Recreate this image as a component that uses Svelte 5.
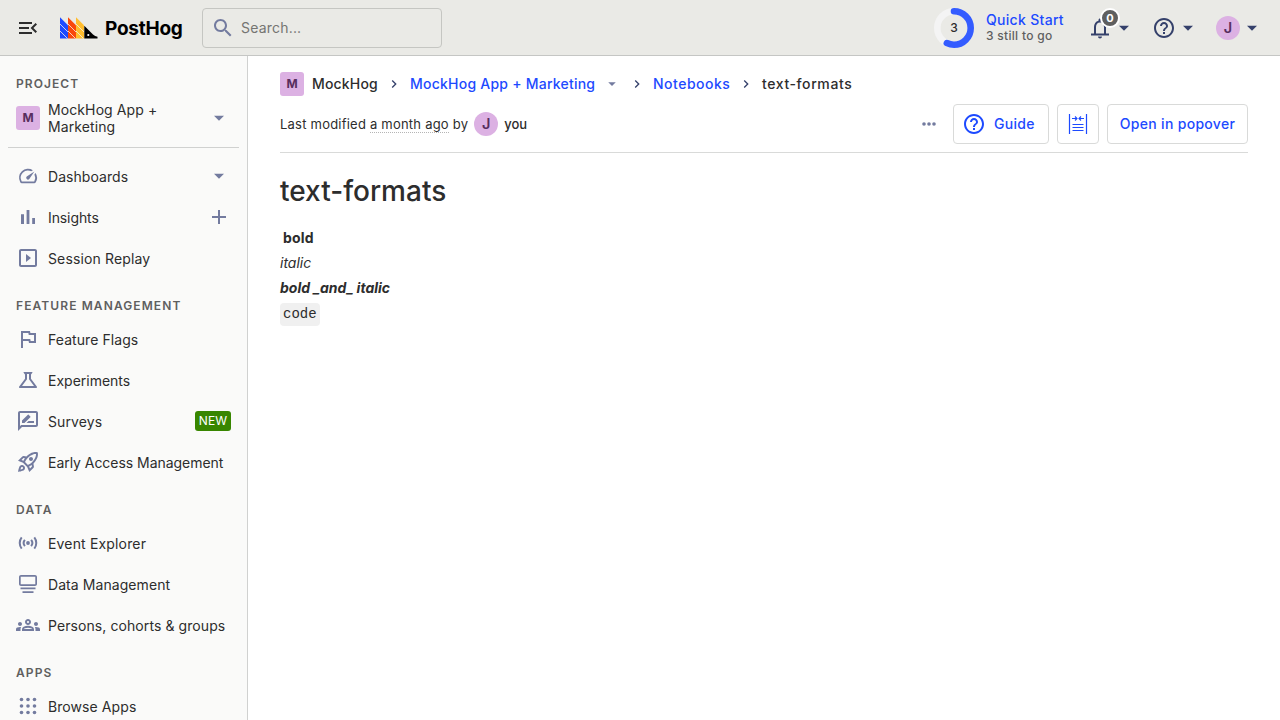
<script>
  const icons = {
    menu: 'M3 18h13v-2H3v2zm0-5h10v-2H3v2zm0-7v2h13V6H3zm18 9.59L17.42 12 21 8.41 19.59 7l-5 5 5 5L21 15.59z',
    search: 'M15.5 14h-.79l-.28-.27C15.41 12.59 16 11.11 16 9.5 16 5.91 13.09 3 9.5 3S3 5.91 3 9.5 5.91 16 9.5 16c1.61 0 3.09-.59 4.23-1.57l.27.28v.79l5 4.99L20.49 19l-4.99-5zm-6 0C7.01 14 5 11.99 5 9.5S7.01 5 9.5 5 14 7.01 14 9.5 11.99 14 9.5 14z',
    bell: 'M12 22.6c1.1 0 2-.9 2-2h-4c0 1.1.9 2 2 2zm6-6v-5.6c0-3.07-1.63-5.64-4.5-6.32V4c0-.83-.67-1.5-1.5-1.5s-1.5.67-1.5 1.5v.68C7.64 5.36 6 7.92 6 11v6.5H3v2h18v-2h-3v-1zm-2 .9H8v-6.5c0-2.48 1.51-4.5 4-4.5s4 2.02 4 4.5v6.5z',
    help: 'M11 18h2v-2h-2v2zm1-16C6.48 2 2 6.48 2 12s4.48 10 10 10 10-4.48 10-10S17.52 2 12 2zm0 18c-4.41 0-8-3.59-8-8s3.59-8 8-8 8 3.59 8 8-3.59 8-8 8zm0-14c-2.21 0-4 1.79-4 4h2c0-1.1.9-2 2-2s2 .9 2 2c0 2-3 1.75-3 5h2c0-2.25 3-2.5 3-5 0-2.21-1.79-4-4-4z',
    drop: 'M7 9.7l5 5 5-5z',
    plus: 'M19 13h-6v6h-2v-6H5v-2h6V5h2v6h6v2z',
    chart: 'M5 9.2h3V19H5V9.2zM10.6 5h2.8v14h-2.8V5zm5.6 8H19v6h-2.8v-6z',
    play: 'M10 8v8l5-4-5-4zm9-5H5c-1.1 0-2 .9-2 2v14c0 1.1.9 2 2 2h14c1.1 0 2-.9 2-2V5c0-1.1-.9-2-2-2zm0 16H5V5h14v14z',
    flag: 'M12.36 6l.4 2H18v6h-3.36l-.4-2H7V6h5.36M14 4H5v17h2v-7h5.6l.4 2h7V6h-5.6L14 4z',
    flask: 'M13 11.33L18 18H6l5-6.67V6h2m2.96-2H8.04c-.42 0-.65.48-.39.81L9 6.5v4.17L3.2 18.4c-.49.66-.02 1.6.8 1.6h16c.82 0 1.29-.94.8-1.6L15 10.67V6.5l1.35-1.69c.26-.33.03-.81-.39-.81z',
    survey: 'M20 2H4c-1.1 0-1.99.9-1.99 2L2 22l4-4h14c1.1 0 2-.9 2-2V4c0-1.1-.9-2-2-2zm0 14H5.17l-.59.59-.58.58V4h16v12zm-9.5-2H18v-2h-5.5zm3.86-5.87c.2-.2.2-.51 0-.71l-1.77-1.77c-.2-.2-.51-.2-.71 0L6 11.53V14h2.47l5.89-5.87z',
    rocket: 'M6 15c-.83 0-1.58.34-2.12.88C2.7 17.06 2 22 2 22s4.94-.7 6.12-1.88C8.66 19.58 9 18.83 9 18c0-1.66-1.34-3-3-3zm.71 3.71c-.28.28-2.17.76-2.17.76s.47-1.88.76-2.17c.17-.19.42-.3.7-.3.55 0 1 .45 1 1 0 .28-.11.53-.29.71zM17.42 13.65c6.36-6.36 4.24-11.31 4.24-11.31s-4.95-2.12-11.31 4.24l-2.49-.5c-.65-.13-1.33.08-1.81.55L2 10.69l5 2.14L11.17 17l2.14 5 4.05-4.05c.47-.47.68-1.15.55-1.81l-.49-2.49zM7.41 10.83l-1.91-.82 1.97-1.97 1.44.29c-.57.83-1.08 1.7-1.5 2.5zm6.58 7.67l-.82-1.91c.8-.42 1.67-.93 2.49-1.5l.29 1.44-1.96 1.97zM16 12.24c-1.32 1.32-3.38 2.4-4.04 2.73l-2.93-2.93c.32-.65 1.4-2.71 2.73-4.04 4.68-4.68 8.23-3.99 8.23-3.99s.69 3.55-3.99 8.23zM15 11c1.1 0 2-.9 2-2s-.9-2-2-2-2 .9-2 2 .9 2 2 2z',
    data: 'M5 3h14c1.1 0 2 .9 2 2v7c0 1.1-.9 2-2 2H5c-1.1 0-2-.9-2-2V5c0-1.1.9-2 2-2zm-.3 1.7v7.6h14.6V4.7H4.7zM4.5 15.5h15v1.8h-15zM6.5 19.2h11v1.8h-11z',
    groups: 'M4 13c1.1 0 2-.9 2-2s-.9-2-2-2-2 .9-2 2 .9 2 2 2zm1.13 1.1c-.37-.06-.74-.1-1.13-.1-.99 0-1.93.21-2.78.58C.48 14.9 0 15.62 0 16.43V18h4.5v-1.61c0-.83.23-1.61.63-2.29zM20 13c1.1 0 2-.9 2-2s-.9-2-2-2-2 .9-2 2 .9 2 2 2zm4 3.43c0-.81-.48-1.53-1.22-1.85-.85-.37-1.79-.58-2.78-.58-.39 0-.76.04-1.13.1.4.68.63 1.46.63 2.29V18H24v-1.57zm-7.76-2.78c-1.17-.52-2.61-.9-4.24-.9s-3.07.39-4.24.9C6.68 14.13 6 15.21 6 16.39V18h12v-1.61c0-1.18-.68-2.26-1.76-2.74zM8.07 16c.09-.23.13-.39.91-.69.97-.38 1.99-.56 3.02-.56s2.05.18 3.02.56c.77.3.81.46.91.69H8.07zM12 8c.55 0 1 .45 1 1s-.45 1-1 1-1-.45-1-1 .45-1 1-1m0-2c-1.66 0-3 1.34-3 3s1.34 3 3 3 3-1.34 3-3-1.34-3-3-3z',
    chevron: 'M8.6 16.6L13.2 12 8.6 7.4 10 6l6 6-6 6z'
  };

  const sections = [
    { items: [
      { label: 'Dashboards', icon: 'gauge', side: 'drop', track: 0.05 },
      { label: 'Insights', icon: 'chart', side: 'plus', track: -0.1 },
      { label: 'Session Replay', icon: 'play', track: 0.13 }
    ] },
    { title: 'Feature management', track: 1.1, items: [
      { label: 'Feature Flags', icon: 'flag', track: 0.07 },
      { label: 'Experiments', icon: 'flask', track: 0 },
      { label: 'Surveys', icon: 'survey', tag: 'NEW', track: 0.1 },
      { label: 'Early Access Management', icon: 'rocket', track: -0.04 }
    ] },
    { title: 'Data', track: 1.3, items: [
      { label: 'Event Explorer', icon: 'live', track: 0.16 },
      { label: 'Data Management', icon: 'data', track: 0.07 },
      { label: 'Persons, cohorts & groups', icon: 'groups', track: 0.08 }
    ] },
    { title: 'Apps', track: 1.1, items: [{ label: 'Browse Apps', icon: 'apps', track: 0.08 }] }
  ];
</script>

{#snippet icon(name, size = 24)}
  <svg width={size} height={size} viewBox="0 0 24 24" fill="currentColor" aria-hidden="true">
    {#if name === 'gauge'}
      <g transform="translate(1.2 1.2) scale(.9)">
        <path d="M20.38 8.57l-1.23 1.85a8 8 0 0 1-.22 7.58H5.07A8 8 0 0 1 15.58 6.85l1.85-1.23A10 10 0 0 0 3.35 19a2 2 0 0 0 1.72 1h13.85a2 2 0 0 0 1.74-1 10 10 0 0 0-.27-10.44zM10.59 15.41a2 2 0 0 0 2.83 0l5.66-8.49-8.49 5.66a2 2 0 0 0 0 2.83z" />
      </g>
    {:else if name === 'live'}
      <circle cx="12" cy="12" r="1.9" />
      <path d="M8.9 8.9a4.8 4.8 0 0 0 0 6.2M15.1 8.9a4.8 4.8 0 0 1 0 6.2M5.7 6.4a8.9 8.9 0 0 0 0 11.2M18.3 6.4a8.9 8.9 0 0 1 0 11.2" fill="none" stroke="currentColor" stroke-width="2" />
    {:else if name === 'apps'}
      {#each [5.5, 12, 18.5] as y}
        {#each [5.5, 12, 18.5] as x}
          <circle cx={x} cy={y} r="1.8" />
        {/each}
      {/each}
    {:else}
      <path d={icons[name]} />
    {/if}
  </svg>
{/snippet}

<div class="app">
  <header>
    <div class="menu">{@render icon('menu')}</div>
    <div class="logo">
      <svg width="38" height="22" viewBox="0 0 38 22" aria-hidden="true">
        <path fill="#1d4aff" d="M0 .3L8 8.3V21.5H0z" />
        <path fill="#f9480b" d="M8 .3L16 8.3V21.5H8z" />
        <path fill="#ffbd2e" d="M16 .3L24 8.3V21.5H16z" />
        <path d="M0 7L8 15M0 14L7.5 21.5M8 7L16 15M8 14L15.5 21.5M16 7L24 15M16 14L23.5 21.5" stroke="#f4f1ea" stroke-width=".8" />
        <path fill="#000" d="M24.3 8.8L33 17.5Q35 19.4 37.5 19.8V21.5H24.3z" />
        <circle cx="28.3" cy="18" r="1.1" fill="#fff" />
      </svg>
      <span>PostHog</span>
    </div>
    <div class="search">{@render icon('search')}<span>Search...</span></div>
    <div class="quick">
      <svg width="40" height="40" viewBox="0 0 40 40" aria-hidden="true">
        <circle cx="20" cy="20" r="16.7" fill="none" stroke="#f4f4f4" stroke-width="6.6" />
        <circle cx="20" cy="20" r="16.7" fill="none" stroke="#345cff" stroke-width="6.6" stroke-linecap="round" stroke-dasharray="59.5 105" transform="rotate(-90 20 20)" />
        <text x="20" y="24.2" text-anchor="middle">3</text>
      </svg>
      <div class="quick-text"><b>Quick Start</b><span>3 still to go</span></div>
    </div>
    <div class="top-item bell">{@render icon('bell')}<i>0</i>{@render icon('drop')}</div>
    <div class="top-item">{@render icon('help')}{@render icon('drop')}</div>
    <div class="top-item"><span class="avatar round">J</span>{@render icon('drop')}</div>
  </header>

  <div class="body">
    <nav>
      <h5 class="first">Project</h5>
      <div class="row project">
        <span class="avatar">M</span>
        <span class="label">MockHog App + Marketing</span>
        {@render icon('drop')}
      </div>
      <hr />
      {#each sections as section}
        {#if section.title}<h5 style:letter-spacing="{section.track}px">{section.title}</h5>{/if}
        <div class="rows">
          {#each section.items as item}
            <div class="row">
              {@render icon(item.icon)}
              <span class="label" style:letter-spacing="{item.track}px">{item.label}</span>
              {#if item.side}{@render icon(item.side)}{/if}
              {#if item.tag}<span class="tag">{item.tag}</span>{/if}
            </div>
          {/each}
        </div>
      {/each}
    </nav>

    <main>
      <div class="crumbs">
        <span class="avatar">M</span>
        <span class="org">MockHog</span>
        <span class="sep">{@render icon('chevron', 16)}</span>
        <a class="project-link" href="#app">MockHog App + Marketing</a>
        <span class="switch">{@render icon('drop', 18)}</span>
        <span class="sep after">{@render icon('chevron', 16)}</span>
        <a class="notebooks" href="#notebooks">Notebooks</a>
        <span class="sep">{@render icon('chevron', 16)}</span>
        <span class="current">text-formats</span>
      </div>
      <div class="actions">
        <p>Last modified <u>a month ago</u> by</p>
        <span class="avatar round">J</span>
        <span class="you">you</span>
        <span class="more">
          <svg width="16" height="16" viewBox="0 0 16 16" fill="currentColor" aria-hidden="true">
            <circle cx="3" cy="8" r="1.8" /><circle cx="8" cy="8" r="1.8" /><circle cx="13" cy="8" r="1.8" />
          </svg>
        </span>
        <button class="guide">{@render icon('help')}Guide</button>
        <button class="width" aria-label="Width">
          <svg width="20" height="20" viewBox="0 0 20 20" fill="none" stroke="currentColor" aria-hidden="true">
            <path d="M1.5 0v20M18.5 0v20" stroke-width="1.2" />
            <path d="M4.5 10.5h11M4.5 13.5h11M4.5 16.5h11M4 4.5h5M16 4.5h-5M7 2.5L9 4.5 7 6.5M13 2.5L11 4.5l2 2" stroke-width="1.1" />
          </svg>
        </button>
        <button class="popover">Open in popover</button>
      </div>
      <article>
        <h1>text-formats</h1>
        <p class="lead"><strong>bold</strong></p>
        <p><em>italic</em></p>
        <p><strong><em>bold _and_ italic</em></strong></p>
        <p><code>code</code></p>
      </article>
    </main>
  </div>
</div>

<style>
  :global(body) { background: #fff; }
  .app {
    display: flex; flex-direction: column; height: 720px; overflow: hidden;
    font: 400 14px/20px Inter, sans-serif; color: #2d2d2d;
  }
  * { box-sizing: border-box; }
  svg { display: block; flex: none; }
  p, h1, h5 { margin: 0; }
  header {
    flex: none; height: 56px; display: flex; align-items: center; padding: 0 16px;
    background: #eaeae6; border-bottom: 1px solid #c5c6c4;
  }
  .logo { display: flex; align-items: center; margin-left: 20px; width: 126px; color: #000; gap: 7px; }
  .logo span { font-weight: 700; font-size: 19px; letter-spacing: -.25px; padding-top: 2px; }
  .search {
    display: flex; align-items: center; gap: 6px; width: 240px; height: 40px; margin-left: 16px;
    padding: 0 8px; border: 1px solid #c5c6c2; border-radius: 4px; color: #737b9f;
  }
  .search span { color: #757572; letter-spacing: .2px; }
  .quick { display: flex; align-items: center; gap: 12px; margin-left: auto; }
  .quick text { font-size: 12px; font-weight: 500; fill: #2d2d2d; }
  .quick-text { display: flex; flex-direction: column; width: 78px; white-space: nowrap; letter-spacing: .3px; }
  .quick-text b { color: #1d4aff; font-weight: 500; line-height: 16px; }
  .quick-text span { font-size: 12px; line-height: 16px; font-weight: 500; color: #5f5f5f; }
  .top-item { position: relative; display: flex; align-items: center; width: 48px; margin-left: 16px; color: #35416b; }
  .bell { margin-left: 24px; }
  .bell i {
    position: absolute; left: 12px; top: -8px; width: 20px; height: 20px; border-radius: 50%;
    border: 2px solid #fff; background: #5f5f5f; color: #fff;
    font: 700 11px/16px Inter, sans-serif; text-align: center;
  }
  .avatar {
    flex: none; width: 24px; height: 24px; border-radius: 3px; background: #dcb1e3; color: #572e5e;
    font-size: 12px; line-height: 24px; font-weight: 700; text-align: center;
  }
  .avatar.round { border-radius: 50%; font-size: 14.5px; font-weight: 600; }
  .body { flex: 1; display: flex; min-height: 0; }
  nav {
    flex: none; width: 248px; padding: 15px 8px 0; background: #fafaf9; overflow: hidden;
    border-right: 1px solid #d0d1d0;
  }
  h5 {
    height: 26px; margin-top: 15px; padding-left: 8px; color: #5f5f5f; text-transform: uppercase;
    font-size: 12px; line-height: 26px; font-weight: 600; letter-spacing: 1.05px;
  }
  h5.first { margin-top: 0; }
  .rows { display: flex; flex-direction: column; gap: 1px; }
  .row { display: flex; align-items: center; height: 40px; padding: 0 8px; gap: 8px; color: #737b9f; }
  .label { flex: 1; color: #2d2d2d; white-space: nowrap; padding-top: 1px; }
  .project { margin-top: 1px; }
  .project .label { white-space: normal; line-height: 17px; padding: 0 20px 0 0; letter-spacing: .1px; }
  hr { margin: 9px 0 8px; border: 0; border-top: 1px solid #d0d1d0; }
  .tag {
    width: 36px; height: 20px; border-radius: 3px; background: #388600; color: #fff; text-align: center;
    font-size: 12px; line-height: 20px; font-weight: 400; letter-spacing: .2px;
  }
  main { flex: 1; padding: 16px 32px; min-width: 0; }
  .crumbs { display: flex; align-items: center; height: 24px; font-weight: 500; white-space: nowrap; }
  .org { width: 66px; margin-left: 8px; letter-spacing: .17px; }
  a { color: #1d4aff; text-decoration: none; }
  .project-link { width: 185px; letter-spacing: .23px; }
  .notebooks { width: 77px; letter-spacing: .5px; }
  .current { letter-spacing: .6px; }
  .sep { width: 16px; margin: 0 8px; color: #35416b; }
  .sep.after { margin-left: 7px; }
  .switch { width: 20px; margin-left: 7px; padding-left: 1px; color: #737b9f; }
  .actions {
    display: flex; align-items: center; height: 57px; border-bottom: 1px solid #d9dad9;
    font-size: 13px; white-space: nowrap;
  }
  .actions p { letter-spacing: .22px; }
  u { text-decoration: none; border-bottom: 1px dotted #b5b5b5; }
  .actions .avatar { margin: 0 6px; }
  .you { font-weight: 500; }
  .more { margin: 0 16px 0 auto; color: #737b9f; }
  button {
    display: flex; align-items: center; justify-content: center; height: 40px; padding: 0;
    background: #fff; border: 1px solid #d9dad9; border-radius: 4px; color: #1d4aff;
    font: 500 14px/20px Inter, sans-serif; letter-spacing: .3px;
  }
  .guide { width: 96px; gap: 8px; justify-content: flex-start; padding-left: 8px; }
  .width { width: 42px; margin: 0 8px; }
  .popover { width: 141px; }
  article { padding-top: 18px; }
  h1 { font-size: 28px; line-height: 40px; font-weight: 500; }
  article p { height: 25px; line-height: 25px; }
  article .lead { margin-top: 14px; padding-left: 3px; letter-spacing: .2px; }
  strong { font-weight: 700; }
  code {
    font: 14px/21px "Liberation Mono", monospace; background: #f0f0f0; border-radius: 4px; padding: 3px 3px 4px;
  }
</style>
